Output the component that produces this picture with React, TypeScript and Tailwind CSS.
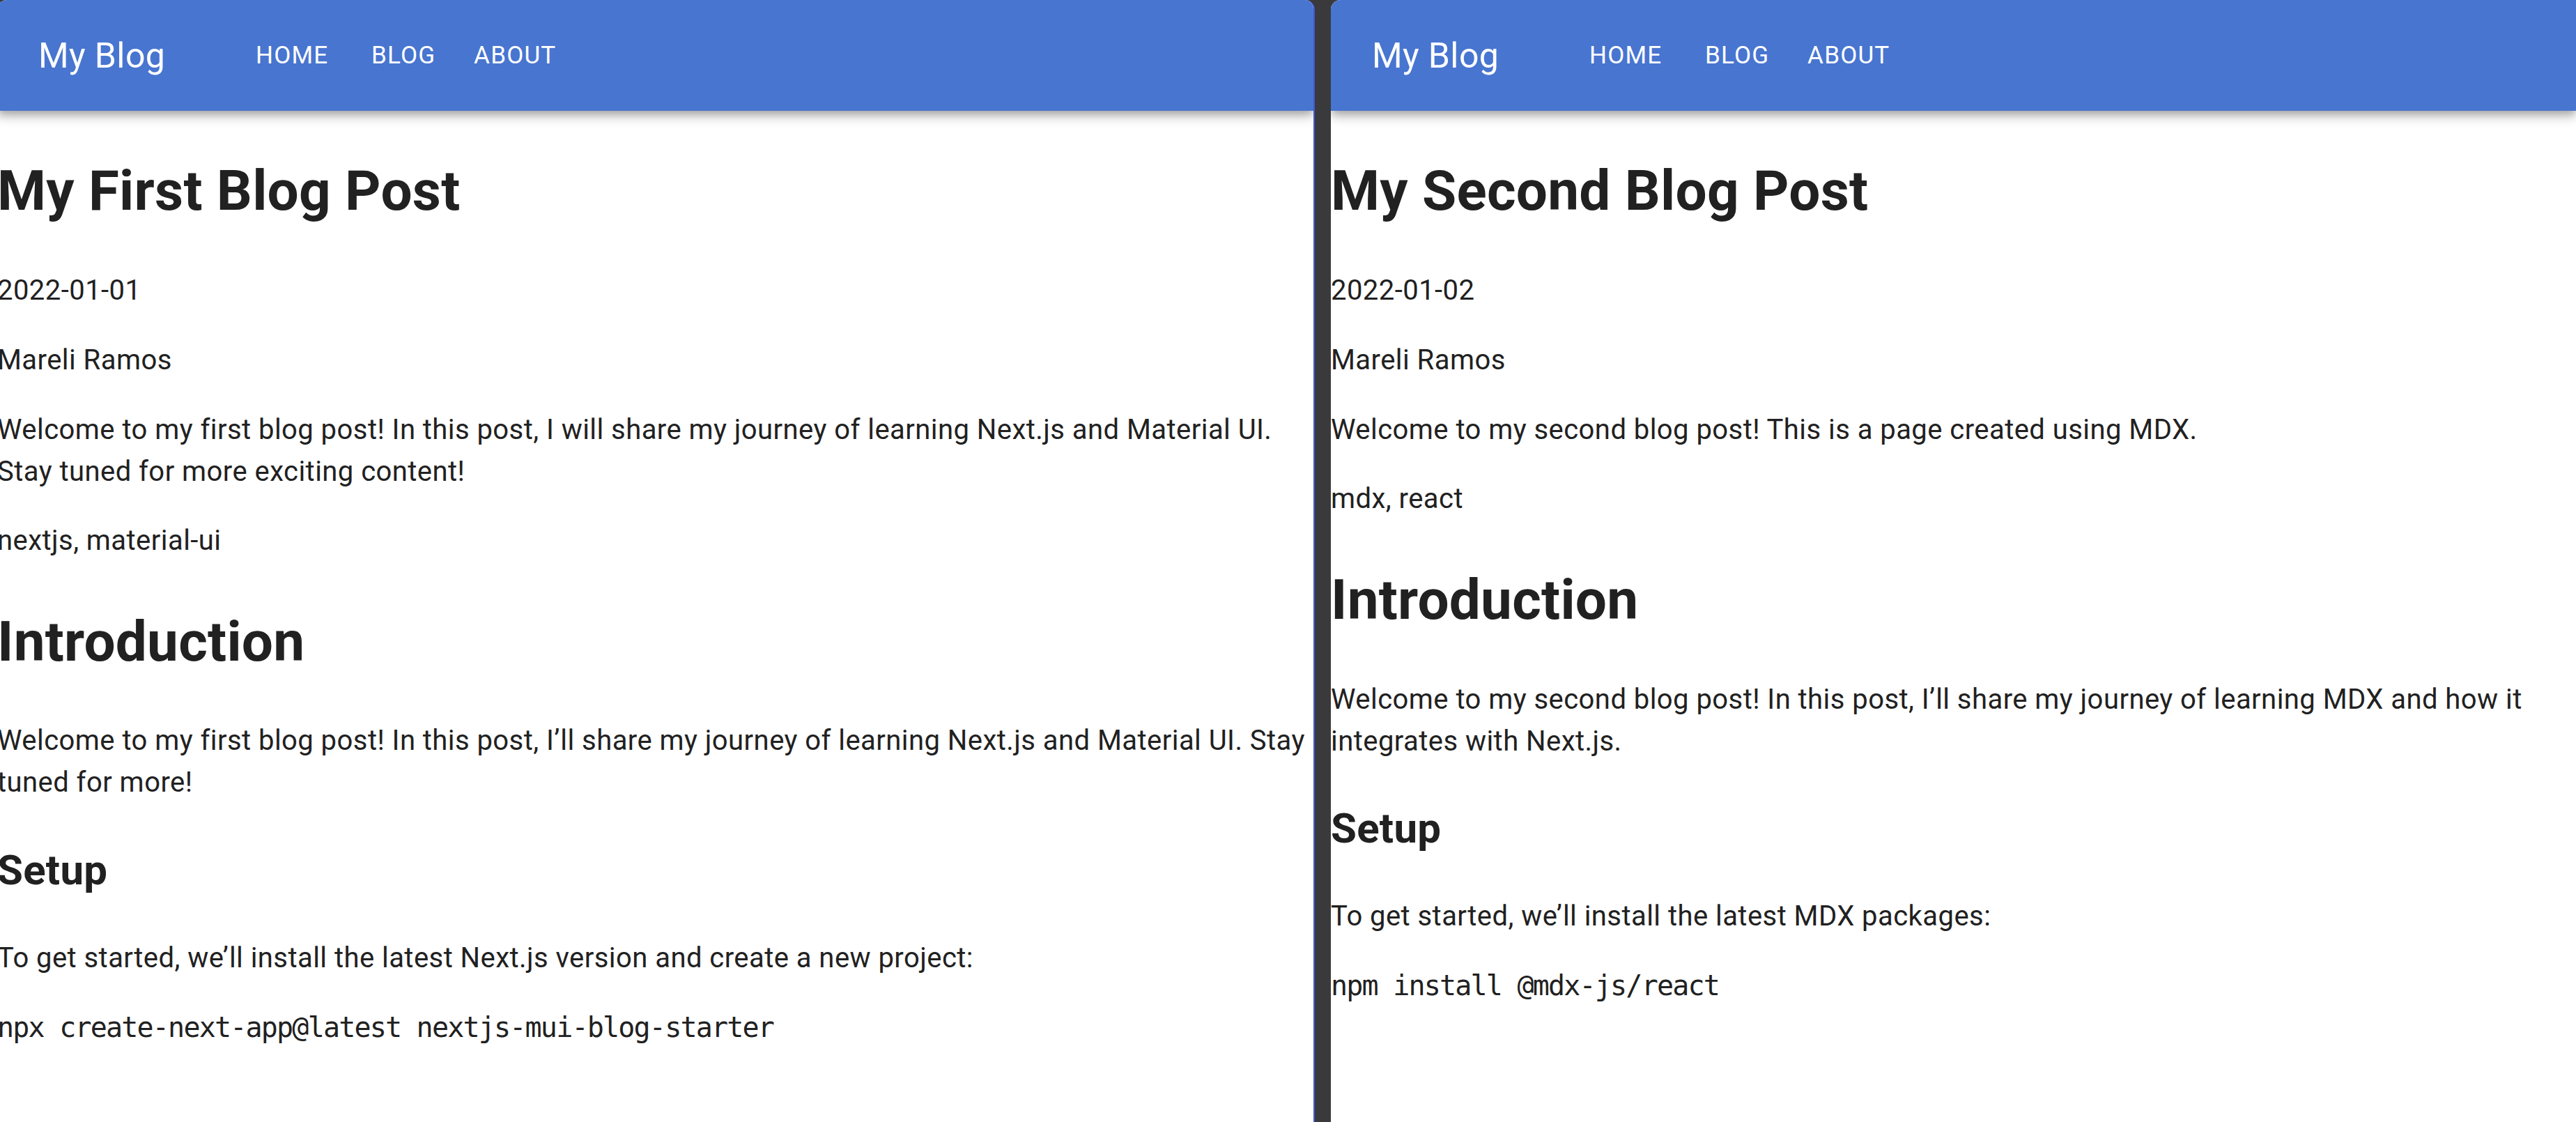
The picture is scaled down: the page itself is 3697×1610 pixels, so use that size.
import React from "react";

type Block =
  | { kind: "h1"; text: string; mt: string }
  | { kind: "h2"; text: string; mt: string }
  | { kind: "p"; text: string; mt: string }
  | { kind: "code"; text: string; mt: string };

function Header() {
  return (
    <header className="relative z-10 h-[159px] shrink-0 bg-[#4875d0] text-white flex items-center px-[59px] shadow-[0_5px_10px_-2.5px_rgba(0,0,0,0.2),0_10px_12.5px_0_rgba(0,0,0,0.14),0_2.5px_25px_0_rgba(0,0,0,0.12)]">
      <div className="text-[50px] leading-[80px] font-normal tracking-[0.375px] whitespace-nowrap">My Blog</div>
      <nav className="ml-[102px] flex">
        {["HOME", "BLOG", "ABOUT"].map((l) => (
          <div
            key={l}
            className="min-w-[160px] px-[20px] py-[15px] text-center text-[35px] leading-[61px] font-normal tracking-[1.2px] uppercase"
          >
            {l}
          </div>
        ))}
      </nav>
    </header>
  );
}

function Article({ blocks }: { blocks: Block[] }) {
  return (
    <main className="flex flex-col text-[#212121]">
      {blocks.map((b, i) => {
        if (b.kind === "h1")
          return (
            <h1 key={i} className={`${b.mt} text-[80px] leading-[96px] font-bold tracking-[0.25px]`}>
              {b.text}
            </h1>
          );
        if (b.kind === "h2")
          return (
            <h2 key={i} className={`${b.mt} text-[60px] leading-[72px] font-bold tracking-[0.25px]`}>
              {b.text}
            </h2>
          );
        if (b.kind === "code")
          return (
            <pre
              key={i}
              className={`${b.mt} text-[40px] leading-[60px] tracking-[-1.8px] font-['DejaVu_Sans_Mono',monospace] whitespace-pre`}
            >
              {b.text}
            </pre>
          );
        return (
          <p key={i} className={`${b.mt} text-[40px] leading-[60px] tracking-[0.45px]`}>
            {b.text}
          </p>
        );
      })}
    </main>
  );
}

const first: Block[] = [
  { kind: "h1", text: "My First Blog Post", mt: "mt-[67px]" },
  { kind: "p", text: "2022-01-01", mt: "mt-[65px]" },
  { kind: "p", text: "Mareli Ramos", mt: "mt-[40px]" },
  {
    kind: "p",
    text: "Welcome to my first blog post! In this post, I will share my journey of learning Next.js and Material UI. Stay tuned for more exciting content!",
    mt: "mt-[40px]",
  },
  { kind: "p", text: "nextjs, material-ui", mt: "mt-[39px]" },
  { kind: "h1", text: "Introduction", mt: "mt-[67px]" },
  {
    kind: "p",
    text: "Welcome to my first blog post! In this post, I\u2019ll share my journey of learning Next.js and Material UI. Stay tuned for more!",
    mt: "mt-[64px]",
  },
  { kind: "h2", text: "Setup", mt: "mt-[60px]" },
  {
    kind: "p",
    text: "To get started, we\u2019ll install the latest Next.js version and create a new project:",
    mt: "mt-[60px]",
  },
  { kind: "code", text: "npx create-next-app@latest nextjs-mui-blog-starter", mt: "mt-[39px]" },
];

const second: Block[] = [
  { kind: "h1", text: "My Second Blog Post", mt: "mt-[67px]" },
  { kind: "p", text: "2022-01-02", mt: "mt-[65px]" },
  { kind: "p", text: "Mareli Ramos", mt: "mt-[40px]" },
  { kind: "p", text: "Welcome to my second blog post! This is a page created using MDX.", mt: "mt-[40px]" },
  { kind: "p", text: "mdx, react", mt: "mt-[39px]" },
  { kind: "h1", text: "Introduction", mt: "mt-[67px]" },
  {
    kind: "p",
    text: "Welcome to my second blog post! In this post, I\u2019ll share my journey of learning MDX and how it integrates with Next.js.",
    mt: "mt-[65px]",
  },
  { kind: "h2", text: "Setup", mt: "mt-[59px]" },
  { kind: "p", text: "To get started, we\u2019ll install the latest MDX packages:", mt: "mt-[60px]" },
  { kind: "code", text: "npm install @mdx-js/react", mt: "mt-[39px]" },
];

export default function App() {
  return (
    <div className="h-[1610px] w-[3697px] overflow-hidden bg-[#3a3a3c] flex font-[Roboto,sans-serif]">
      <section className="-ml-[4px] w-[1891px] shrink-0 h-full bg-white rounded-t-[14px] overflow-hidden border-r-2 border-[#4257d6] flex flex-col">
        <Header />
        <Article blocks={first} />
      </section>
      <div className="w-[23px] shrink-0" />
      <section className="flex-1 min-w-0 h-full bg-white rounded-tl-[14px] overflow-hidden flex flex-col">
        <Header />
        <Article blocks={second} />
      </section>
    </div>
  );
}
